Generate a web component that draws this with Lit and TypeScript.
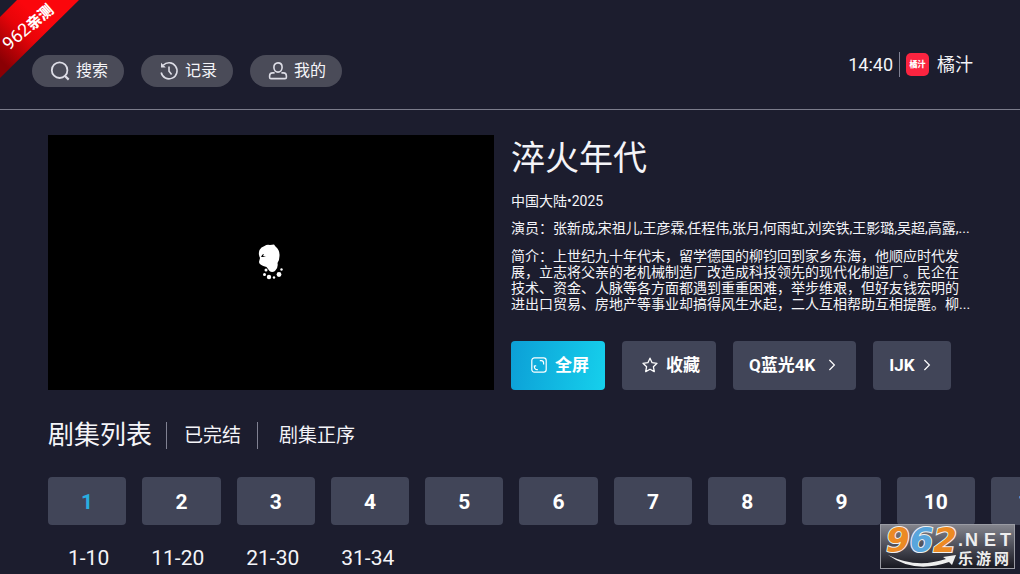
import { LitElement, html, css, svg } from "lit";
import { customElement, state } from "lit/decorators.js";

const searchIcon = svg`<svg class="icon" viewBox="0 0 20 20" width="20" height="20" aria-hidden="true"><circle cx="9.6" cy="9.2" r="7.8" stroke-width="1.8"/><path d="M15 15 18.700 18.600" stroke-width="2.200"/></svg>`;
const historyIcon = svg`<svg class="icon" viewBox="0 0 20 20" width="20" height="20" aria-hidden="true"><path d="M4.2 4.3A8 8 0 1 1 2.2 11.5"/><path d="M2 1.8v4.6h4.8z" fill="currentColor" stroke="none"/><path d="M10 5.6v4.6l2.6 3.4"/></svg>`;
const userIcon = svg`<svg class="icon" viewBox="0 0 20 20" width="20" height="20" aria-hidden="true"><path d="M10 1.9c-2.6 0-4.1 1.9-4.1 4.3 0 2.7 1.7 4.9 4.1 4.9s4.1-2.2 4.1-4.9c0-2.4-1.5-4.3-4.1-4.300z"/><path d="M6.600 11.900H4.600a3 3 0 0 0-3 3v1.300a1.400 1.400 0 0 0 1.400 1.400h14a1.400 1.400 0 0 0 1.400-1.400v-1.300a3 3 0 0 0-3-3h-2"/></svg>`;
const fullIcon = svg`<svg class="icon" viewBox="0 0 16 16" width="16" height="16" aria-hidden="true"><rect x=".8" y=".8" width="14.400" height="14.400" rx="2.600" stroke-width="1.200"/><path d="M8.800 3.600h1.400a2.400 2.400 0 0 1 2.400 2.400v1.400M3.400 8.600V10a2.600 2.600 0 0 0 2.600 2.600h.8M3.600 8.800h1.600" stroke-width="1.200"/></svg>`;
const starIcon = svg`<svg class="icon" viewBox="0 0 16 16" width="16" height="16" aria-hidden="true"><path d="m8 1.200 2.100 4.500 4.900.6-3.600 3.400.9 4.900L8 12.200l-4.300 2.400.9-4.900L1 6.300l4.900-.6z" stroke-width="1.300" stroke-linejoin="round"/></svg>`;
const chevron = svg`<svg class="icon" viewBox="0 0 8 12" width="8" height="12" aria-hidden="true"><path d="m1.400 1 5 5-5 5" stroke-width="1.200"/></svg>`;

@customElement("app-root")
export class AppRoot extends LitElement {
  @state() private current = 1;

  private episodes = Array.from({ length: 11 }, (_, i) => i + 1);
  private ranges = ["1-10", "11-20", "21-30", "31-34"];

  static styles = css`
    :host {
      display: block;
      position: relative;
      min-height: 100vh;
      overflow: hidden;
      background: #1c1d2e;
      color: #f4f4f8;
      font-family: Roboto, "Noto Sans CJK SC", sans-serif;
    }
    * { box-sizing: border-box; }
    button {
      margin: 0;
      padding: 0;
      border: 0;
      background: none;
      color: inherit;
      font: inherit;
      cursor: pointer;
    }
    .icon { display: block; flex: none; fill: none; stroke: currentColor; stroke-width: 1.6; }
    h1, h2, p { margin: 0; font-weight: 400; }

    header {
      display: flex;
      justify-content: space-between;
      padding: 52px 47px 22px 32px;
      border-bottom: 1px solid #7b7c8b;
    }
    nav { display: flex; gap: 17px; padding-top: 3px; }
    .pill {
      display: flex;
      align-items: center;
      gap: 6px;
      height: 32px;
      padding: 0 16px 0 18px;
      border-radius: 16px;
      background: #4a4b58;
      font-size: 16px;
      line-height: 32px;
    }
    .pill .icon { color: #dddde6; }
    .brand { display: flex; align-items: center; height: 25px; font-size: 18px; line-height: 25px; }
    .brand time { padding-right: 6px; }
    .bar { width: 1px; align-self: stretch; background: #808192; }
    .logo {
      width: 23px;
      height: 23px;
      margin: 0 8px 0 6px;
      border-radius: 5px;
      background: #fb2440;
      color: #fff;
      font-size: 8px;
      font-weight: 900;
      line-height: 23px;
      text-align: center;
    }

    .detail {
      display: grid;
      grid-template-columns: 446fr 461fr;
      gap: 17px;
      padding: 25px 48px 0;
    }
    .player {
      display: grid;
      place-items: center;
      aspect-ratio: 7 / 4;
      background: #000;
    }
    .info { display: flex; flex-direction: column; min-width: 0; font-size: 14px; line-height: 16px; }
    h1 { font-size: 34px; line-height: 46px; }
    .meta { margin-top: 12px; }
    .cast { margin-top: 11px; white-space: nowrap; }
    .intro { margin-top: 12px; }
    .actions { display: flex; gap: 17px; margin-top: auto; }
    .action {
      display: flex;
      align-items: center;
      gap: 8px;
      height: 49px;
      padding: 0 16px 0 20px;
      border-radius: 4px;
      background: #414558;
      color: #fff;
      font-size: 17px;
      font-weight: 700;
      line-height: 24px;
      white-space: nowrap;
    }
    .primary { background: linear-gradient(100deg, #0c9fd6, #16d0ec); }
    .wide { gap: 13px; padding: 0 20px 0 16px; }
    .slim { padding: 0 20px 0 16px; }

    .list-head {
      display: flex;
      align-items: center;
      height: 27px;
      margin: 32px 48px 28px;
      font-size: 19px;
      line-height: 27px;
    }
    h2 { font-size: 26px; line-height: 27px; margin-right: 14px; }
    .status { margin: 0 16px 0 17px; }
    .order { margin-left: 21px; }

    .episodes {
      display: grid;
      grid-auto-flow: column;
      grid-auto-columns: calc((100% - 144px) / 10);
      gap: 16px;
      margin: 0 45px 0 48px;
    }
    .episode {
      height: 48px;
      padding-top: 2px;
      border-radius: 4px;
      background: #414558;
      color: #fff;
      font-size: 21px;
      font-weight: 700;
    }
    .current { color: #28aee0; }
    .ranges {
      display: flex;
      gap: 42px;
      padding: 20px 68px 0;
      font-size: 21px;
      line-height: 26px;
    }

    .ribbon { position: absolute; top: 0; left: 0; }
    .ribbon text { font-size: 18px; fill: #fff; }
    .heavy { font-size: 15px; font-weight: 900; }
    .mark { position: absolute; right: 5px; bottom: 5px; overflow: visible; }
    .mark-num { font: italic 700 34px "DejaVu Sans", sans-serif; paint-order: stroke; stroke: #f1f1f1; stroke-width: 2px; }
    .orange { fill: #ec8a23; }
    .blue { fill: #58a5dc; }
    .mark-net { font: 700 18px "Liberation Sans", sans-serif; fill: #eee; }
    .mark-cn { font-size: 15px; font-weight: 700; fill: #eee; }
  `;

  render() {
    return html`
      <header>
        <nav>
          <button class="pill">${searchIcon}搜索</button>
          <button class="pill">${historyIcon}记录</button>
          <button class="pill">${userIcon}我的</button>
        </nav>
        <div class="brand">
          <time>14:40</time><span class="bar"></span>
          <span class="logo">橘汁</span><span>橘汁</span>
        </div>
      </header>

      <main>
        <section class="detail">
          <div class="player">
            <svg width="30" height="40" viewBox="0 0 30 40" fill="#fff" aria-hidden="true">
              <path d="M8.500 4Q11 2 14 3l4-.5 1.500 2Q24 8 23.500 14q0 4-2 7 1 5-2.500 8-3 2-5.500 0l-3-4Q3 23 3 20l1-4Q2 12 3.500 8 5 5 8.500 4z"/>
              <path d="M5 15q1-3 3-3l-1 2 3 1z" fill="#000"/>
              <circle cx="8.500" cy="32.500" r="1.500"/><circle cx="10" cy="28" r="1.500"/><circle cx="13" cy="35" r="2.200"/>
              <circle cx="18" cy="35.500" r="1.200"/><circle cx="23" cy="32.500" r="2.400"/><circle cx="25.500" cy="27.500" r="1.200"/>
            </svg>
          </div>
          <div class="info">
            <h1>淬火年代</h1>
            <p class="meta">中国大陆•2025</p>
            <p class="cast">演员：张新成,宋祖儿,王彦霖,任程伟,张月,何雨虹,刘奕铁,王影璐,吴超,高露,...</p>
            <p class="intro">简介：上世纪九十年代末，留学德国的柳钧回到家乡东海，他顺应时代发展，立志将父亲的老机械制造厂改造成科技领先的现代化制造厂。民企在技术、资金、人脉等各方面都遇到重重困难，举步维艰，但好友钱宏明的进出口贸易、房地产等事业却搞得风生水起，二人互相帮助互相提醒。柳...</p>
            <div class="actions">
              <button class="action primary">${fullIcon}全屏</button>
              <button class="action">${starIcon}收藏</button>
              <button class="action wide">Q蓝光4K${chevron}</button>
              <button class="action slim">IJK${chevron}</button>
            </div>
          </div>
        </section>

        <section>
          <div class="list-head">
            <h2>剧集列表</h2><span class="bar"></span>
            <span class="status">已完结</span><span class="bar"></span>
            <button class="order">剧集正序</button>
          </div>
          <div class="episodes">
            ${this.episodes.map(
              (n) => html`<button class="episode ${n === this.current ? "current" : ""}" @click=${() => (this.current = n)}>${n}</button>`
            )}
          </div>
          <div class="ranges">${this.ranges.map((r) => html`<button>${r}</button>`)}</div>
        </section>
      </main>

      <svg class="ribbon" width="80" height="80" viewBox="0 0 80 80">
        <defs>
          <linearGradient id="red" gradientUnits="userSpaceOnUse" x1="0" y1="60" x2="40" y2="20">
            <stop offset="0" stop-color="#8a0004"/><stop offset=".65" stop-color="#e80409"/><stop offset="1" stop-color="#fb060c"/>
          </linearGradient>
        </defs>
        <path d="M17 0H79L0 78V17z" fill="url(#red)"/>
        <text transform="translate(9 51) rotate(-41)">962<tspan class="heavy">亲测</tspan></text>
      </svg>

      <svg class="mark" width="135" height="45" viewBox="0 0 135 45">
        <defs>
          <linearGradient id="plate" x1="0" y1="0" x2="0" y2="1">
            <stop offset="0" stop-color="#85868e"/><stop offset=".5" stop-color="#4c4d58"/><stop offset="1" stop-color="#17171f"/>
          </linearGradient>
        </defs>
        <rect x=".5" y=".5" width="134" height="44" fill="url(#plate)" stroke="#9a9ba3"/>
        <text class="mark-num" x="6" y="28"><tspan class="orange">9</tspan><tspan class="blue">6</tspan><tspan class="orange">2</tspan></text>
        <path d="M8 31Q36 45 66 35l-3-2 13-2-4 10-3-3Q34 50 8 31z" fill="#eee"/>
        <text class="mark-net"><tspan x="78" y="22">.</tspan><tspan x="85" y="22">N</tspan><tspan x="104" y="22">E</tspan><tspan x="120" y="22">T</tspan></text>
        <text class="mark-cn"><tspan x="78" y="40">乐</tspan><tspan x="96" y="40">游</tspan><tspan x="114" y="40">网</tspan></text>
      </svg>
    `;
  }
}
